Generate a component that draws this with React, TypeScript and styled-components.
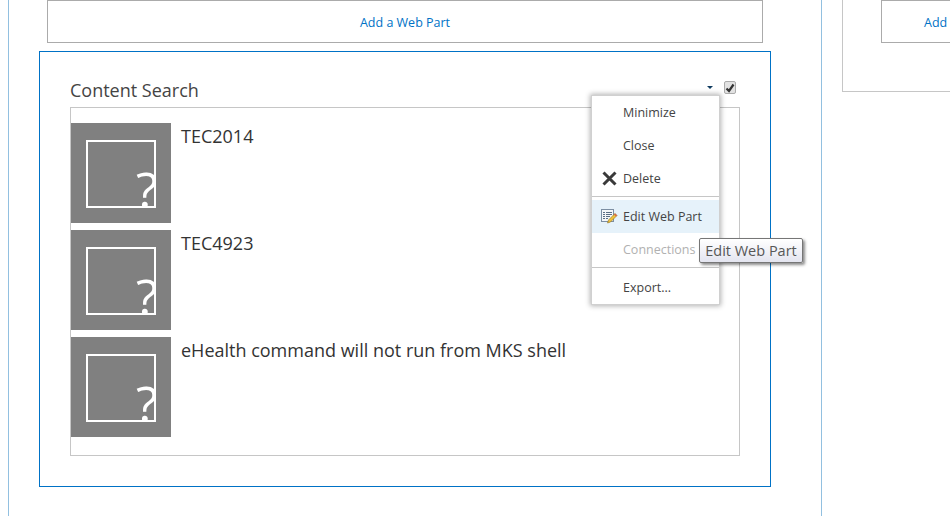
import React from 'react'
import styled, { createGlobalStyle } from 'styled-components'

const GlobalStyle = createGlobalStyle`
	html, body {
		margin: 0;
		padding: 0;
		background: #fff;
		overflow: hidden;
	}
	body {
		font-family: "Open Sans", "Noto Sans", "Liberation Sans", sans-serif;
	}
`

const Page = styled.div`
	display: flex;
	align-items: flex-start;
	width: 950px;
	height: 516px;
	overflow: hidden;
	padding-left: 8px;
	box-sizing: border-box;
`

const Zone = styled.div`
	width: 814px;
	height: 516px;
	flex-shrink: 0;
	box-sizing: border-box;
	border-left: 1px solid #92c0e0;
	border-right: 1px solid #92c0e0;
	padding-left: 30px;
`

const AddPart = styled.div<{ $wide?: boolean }>`
	width: ${p => (p.$wide ? '120px' : '716px')};
	height: 43px;
	flex-shrink: 0;
	margin-left: ${p => (p.$wide ? '0' : '8px')};
	box-sizing: border-box;
	border: 1px solid #ababab;
	display: flex;
	align-items: center;
	justify-content: ${p => (p.$wide ? 'flex-start' : 'center')};
	padding: 1px 0 0 ${p => (p.$wide ? '42px' : '0')};
	color: #0072c6;
	font-size: 12.5px;
	white-space: nowrap;
`

const WebPart = styled.div`
	position: relative;
	width: 732px;
	height: 436px;
	margin-top: 8px;
	box-sizing: border-box;
	border: 1px solid #0072c6;
	padding: 26px 30px 0;
`

const TitleRow = styled.div`
	display: flex;
	align-items: flex-start;
	height: 29px;
`

const Title = styled.h2`
	flex: 1;
	margin: 0;
	font-size: 18px;
	line-height: 24px;
	font-weight: 400;
	color: #444;
`

const Caret = styled.span`
	width: 0;
	height: 0;
	margin-top: 8px;
	margin-right: 11px;
	border-left: 3px solid transparent;
	border-right: 3px solid transparent;
	border-top: 3px solid #0f3b5f;
`

const Check = styled.span`
	width: 12px;
	height: 13px;
	margin-top: 3px;
	margin-right: 4px;
	box-sizing: border-box;
	border: 1px solid #ababab;
	border-radius: 2px;
	background: #e2e2e2;
	display: flex;
	align-items: center;
	justify-content: center;
`

const Results = styled.div`
	width: 670px;
	height: 349px;
	box-sizing: border-box;
	border: 1px solid #c6c6c6;
	padding-top: 15px;
	display: flex;
	flex-direction: column;
	gap: 7px;
`

const Row = styled.div`
	display: flex;
	gap: 10px;
`

const Thumb = styled.div`
	width: 100px;
	height: 100px;
	padding: 17px 15px 0;
	box-sizing: border-box;
	background: #808080;
`

const ThumbFrame = styled.div`
	position: relative;
	width: 70px;
	height: 68px;
	box-sizing: border-box;
	border: 2px solid #fff;
	overflow: hidden;
`

const ThumbMark = styled.span`
	position: absolute;
	left: 48px;
	top: 22px;
	color: #fff;
	font-size: 50px;
	line-height: 50px;
`

const RowTitle = styled.div`
	font-size: 18px;
	line-height: 26px;
	color: #333;
`

const Menu = styled.div`
	position: absolute;
	left: 551px;
	top: 43px;
	width: 129px;
	box-sizing: border-box;
	background: #fff;
	border: 1px solid #d0d0d0;
	box-shadow: 0 0 5px 1px rgba(0, 0, 0, 0.3);
	display: flex;
	flex-direction: column;
`

const MenuItem = styled.div<{ $active?: boolean; $disabled?: boolean }>`
	display: flex;
	align-items: center;
	height: 33px;
	background: ${p => (p.$active ? '#e6f2fa' : 'transparent')};
	color: ${p => (p.$disabled ? '#b1b1b1' : '#444')};
	font-size: 12.5px;
`

const MenuIcon = styled.span`
	width: 31px;
	flex-shrink: 0;
	display: flex;
	justify-content: center;
	padding-left: 3px;
	box-sizing: border-box;
`

const MenuRule = styled.div`
	height: 1px;
	margin: 1px 0 3px;
	background: #c6c6c6;
`

const Tooltip = styled.div`
	position: absolute;
	left: 107px;
	top: 142px;
	width: 104px;
	height: 25px;
	box-sizing: border-box;
	display: flex;
	align-items: center;
	justify-content: center;
	border: 1px solid #767676;
	border-radius: 2px;
	background: linear-gradient(#ffffff, #e4e5f0);
	box-shadow: 2px 2px 3px rgba(0, 0, 0, 0.45);
	color: #575757;
	font-size: 14.5px;
	white-space: nowrap;
`

const SideZone = styled.div`
	width: 120px;
	height: 92px;
	flex-shrink: 0;
	margin-left: 20px;
	box-sizing: border-box;
	border-left: 1px solid #c6c6c6;
	border-bottom: 1px solid #c6c6c6;
	padding-left: 38px;
`

const DeleteIcon = () => (
	<svg width="15" height="15" viewBox="0 0 15 15">
		<path d="M1.5 1.5 L13.5 13.5 M13.5 1.5 L1.5 13.5" stroke="#3a3a3a" strokeWidth="3" fill="none" />
	</svg>
)

const EditIcon = () => (
	<svg width="17" height="15" viewBox="0 0 17 15">
		<rect x="0.5" y="0.5" width="12" height="12" fill="#f4f6f8" stroke="#7d8fa3" />
		<path d="M2 3.5h2M5 3.5h6M2 5.5h2M5 5.5h6M2 7.5h2M5 7.5h4M2 9.5h2M5 9.5h2" stroke="#5c6f85" />
		<path d="M14 4.5 L16 6.5 L9.5 13 L6.5 14 L7.5 11 Z" fill="#f0c23c" stroke="#8a6d1f" strokeWidth="0.6" />
		<path d="M14 4.5 L16 6.5 L15 7.5 L13 5.5 Z" fill="#d9634c" />
	</svg>
)

const CheckMark = () => (
	<svg width="10" height="10" viewBox="0 0 10 10">
		<path d="M1.5 5.5 L4 8 L8.5 1.5" stroke="#333" strokeWidth="2.2" fill="none" />
	</svg>
)

const results = ['TEC2014', 'TEC4923', 'eHealth command will not run from MKS shell']

export default function App() {
	return (
		<>
			<GlobalStyle />
			<Page>
				<Zone>
					<AddPart>Add a Web Part</AddPart>
					<WebPart>
						<TitleRow>
							<Title>Content Search</Title>
							<Caret />
							<Check><CheckMark /></Check>
						</TitleRow>
						<Results>
							{results.map((title, index) => (
								<Row key={index}>
									<Thumb>
										<ThumbFrame>
											<ThumbMark>?</ThumbMark>
										</ThumbFrame>
									</Thumb>
									<RowTitle>{title}</RowTitle>
								</Row>
							))}
						</Results>
						<Menu>
							<MenuItem><MenuIcon />Minimize</MenuItem>
							<MenuItem><MenuIcon />Close</MenuItem>
							<MenuItem><MenuIcon><DeleteIcon /></MenuIcon>Delete</MenuItem>
							<MenuRule />
							<MenuItem $active><MenuIcon><EditIcon /></MenuIcon>Edit Web Part</MenuItem>
							<MenuItem $disabled><MenuIcon />Connections</MenuItem>
							<MenuRule />
							<MenuItem><MenuIcon />Export...</MenuItem>
							<Tooltip>Edit Web Part</Tooltip>
						</Menu>
					</WebPart>
				</Zone>
				<SideZone>
					<AddPart $wide>Add a Web Part</AddPart>
				</SideZone>
			</Page>
		</>
	)
}
